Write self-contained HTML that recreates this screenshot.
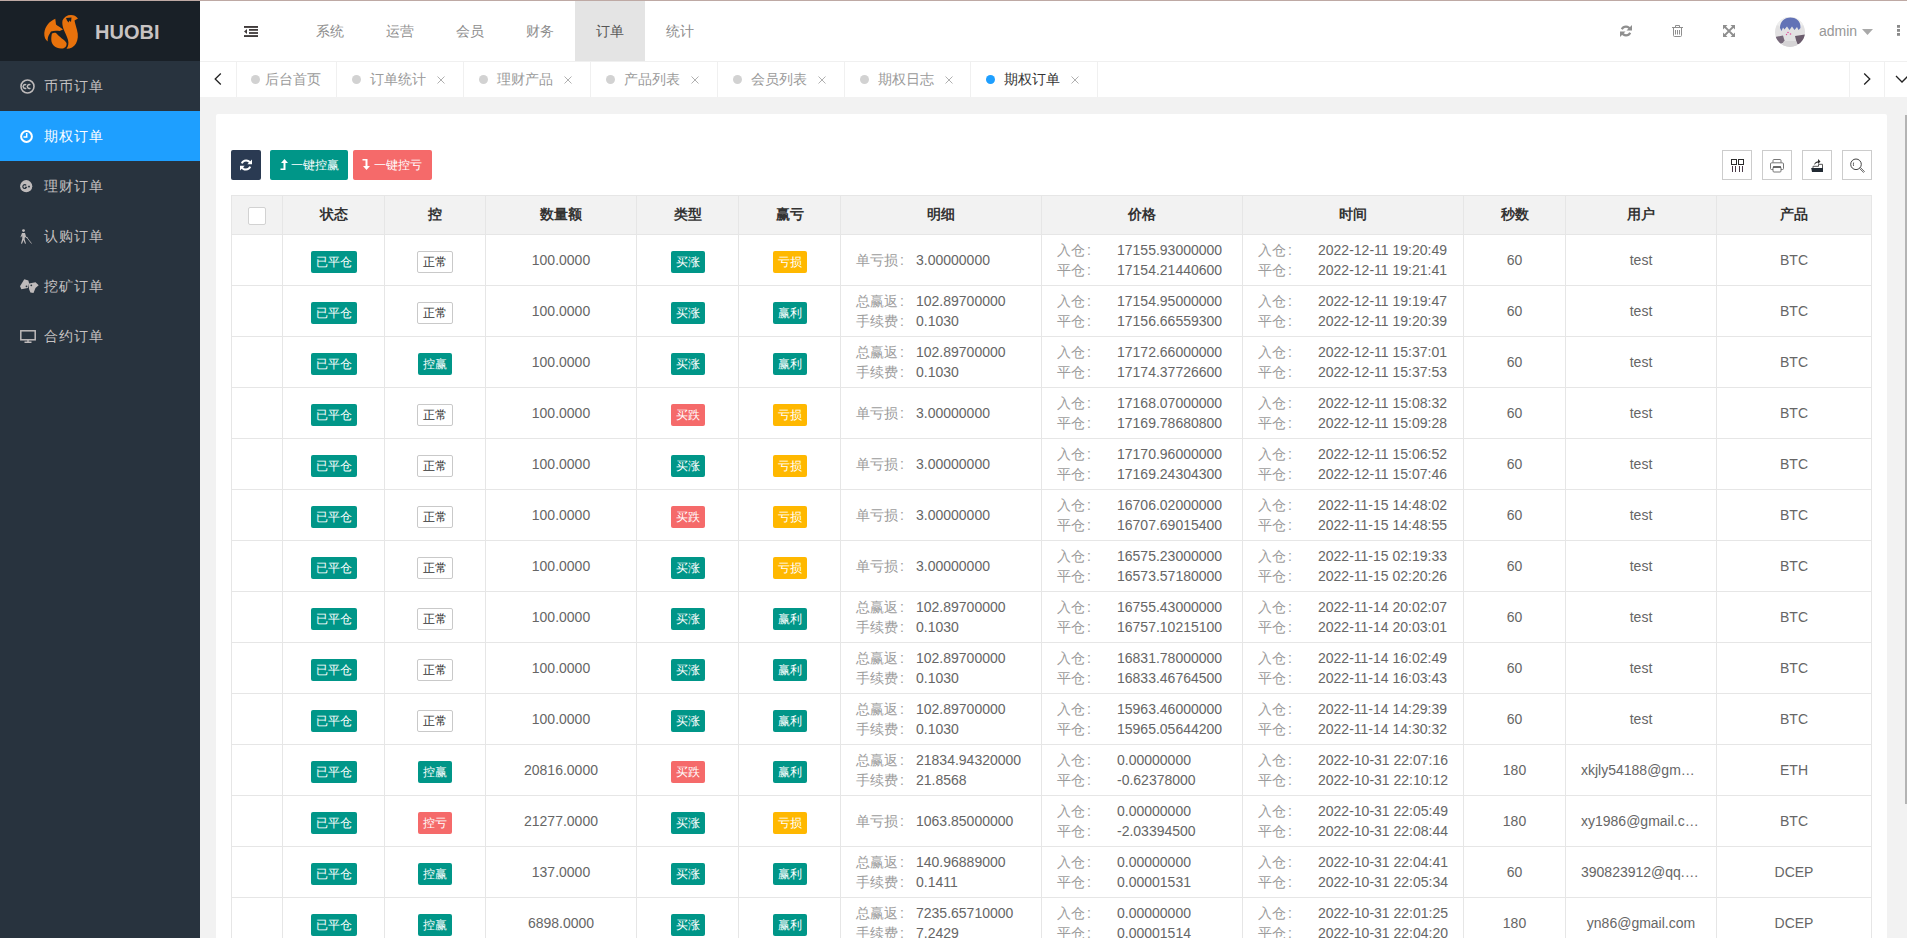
<!DOCTYPE html>
<html><head><meta charset="utf-8"><title>期权订单</title>
<style>
*{margin:0;padding:0;box-sizing:border-box}
html,body{width:1907px;height:938px;overflow:hidden}
body{position:relative;background:#f2f2f2;font-family:"Liberation Sans",sans-serif;font-size:14px;color:#666}
.abs{position:absolute}
.topline{position:absolute;left:0;top:0;width:1907px;height:1px;background:#bea9a4}
.side{position:absolute;left:0;top:1px;width:200px;height:937px;background:#28333e}
.logo{position:absolute;left:0;top:0;width:200px;height:60px;background:#192027}
.logo .t{position:absolute;left:95px;top:19px;font-size:20px;font-weight:bold;color:#c8c3c3;line-height:24px;letter-spacing:0}
.mi{position:absolute;left:0;width:200px;height:50px;color:#c6c2c2}
.mi.on{background:#1e9fff;color:#fff}
.mi .tx{position:absolute;left:44px;top:16px;font-size:14px;line-height:18px;white-space:nowrap;letter-spacing:1px}
.mi svg{position:absolute}
.hdr{position:absolute;left:200px;top:1px;width:1707px;height:60px;background:#fff}
.nav{position:absolute;top:0;height:60px;width:70px;text-align:center;line-height:60px;font-size:14px;color:#8d8d8d}
.nav.on{background:#e4e4e4;color:#565656}
.tabs{position:absolute;left:200px;top:61px;width:1707px;height:36px;background:#fff;border-top:1px solid #f0f0f0}
.sep{position:absolute;top:0;width:1px;height:35px;background:#f0f0f0}
.tab{position:absolute;top:0;height:35px;line-height:35px;font-size:14px;color:#9a9a9a;white-space:nowrap}
.dot{position:absolute;width:9px;height:9px;border-radius:50%;background:#d2d2d2}
.x{position:absolute;font-size:14px;color:#aaa}
.card{position:absolute;left:216px;top:114px;width:1671px;height:830px;background:#fff;border-radius:2px}
.btn{position:absolute;top:150px;height:30px;border-radius:2px;color:#fff;font-size:12px;line-height:30px;white-space:nowrap}
.tool{position:absolute;top:150px;width:30px;height:30px;border:1px solid #ccc}
.grid{position:absolute;background:#e6e6e6}
.th{position:absolute;top:195px;height:39px;line-height:39px;text-align:center;font-size:14px;font-weight:bold;color:#333}
.c{position:absolute;text-align:center;white-space:nowrap;font-size:14px;color:#666}
.bd{position:absolute;height:22px;line-height:22px;font-size:12px;color:#fff;border-radius:2px;text-align:center;white-space:nowrap}
.rim{position:absolute;height:22px;line-height:20px;font-size:12px;color:#333;border:1px solid #c9c9c9;border-radius:2px;background:#fff;text-align:center;white-space:nowrap}
.ln{position:absolute;font-size:14px;line-height:20px;white-space:nowrap}
.lb{color:#9c9c9c}
.vl{color:#666}
.co{margin-left:2px}
</style></head><body>
<div class="topline"></div>

<div class="side"><div class="logo">
<svg class="abs" style="left:40px;top:11px" width="42" height="40" viewBox="0 0 42 40">
<path fill="#e8720c" d="M15.3 6.8 C10 9 5 14 4.3 21 C4 25 5.5 28 7.7 29.5 C7.5 27 8 24 9.5 22 L11 19.5 C14 18.5 17 18.8 19.7 19 L23 17.5 C20.5 15.5 18 14 16 12.5 Z"/>
<path fill="#e8720c" d="M12 21.5 C14 20.5 16 20.5 17 22 C19 25 24 27 26.5 31 C27 34 25 36.5 22 36.5 C16 37 11.5 33 11.3 28 C11.2 25.5 11.5 23 12 21.5 Z"/>
<path fill="#e8720c" d="M22.5 8.5 C24 5 27 3 31 3 C34 3 36 4 38 6.5 L34.5 8.5 C35 11 36 14 37 18 C38.5 23 38 28 36 31.5 C34 35 30 37 26.5 36.8 C28.5 34 28.8 31 28 28 C27 24 25 21 23.5 17 C22.5 14 22 11 22.5 8.5 Z"/>
<path fill="#192027" d="M26 6 L31.5 5.5 L31 10 L29.5 8.5 L28.5 10.5 L27 8.5 Z"/>
</svg>
<div class="t">HUOBI</div></div>
<div class="mi" style="top:60px">
<svg style="left:20px;top:18px" width="15" height="15" viewBox="0 0 15 15"><circle cx="7.5" cy="7.5" r="6.5" fill="none" stroke="#bfbbbb" stroke-width="1.6"/><path d="M6.2 5.8a2 2 0 1 0 0 3.4M10.4 5.8a2 2 0 1 0 0 3.4" fill="none" stroke="#bfbbbb" stroke-width="1.5"/></svg>
<div class="tx">币币订单</div></div>
<div class="mi on" style="top:110px">
<svg style="left:20px;top:19px" width="13" height="13" viewBox="0 0 13 13"><circle cx="6.5" cy="6.5" r="5.4" fill="none" stroke="#fff" stroke-width="2"/><path d="M6.7 3V7H3.5" fill="none" stroke="#fff" stroke-width="1.5"/></svg>
<div class="tx">期权订单</div></div>
<div class="mi" style="top:160px">
<svg style="left:20px;top:19px" width="13" height="13" viewBox="0 0 13 13"><circle cx="6.2" cy="6.2" r="6.1" fill="#bfbbbb"/><path d="M6.2 5.3a1.9 1.9 0 1 0 0.3 2h-1.5" fill="none" stroke="#28333e" stroke-width="1.2"/><path d="M9 5.6v2M8 6.6h2" stroke="#28333e" stroke-width="0.9"/></svg>
<div class="tx">理财订单</div></div>
<div class="mi" style="top:210px">
<svg style="left:20px;top:18px" width="12" height="15" viewBox="0 0 12 15"><circle cx="3.5" cy="1.6" r="1.4" fill="#bfbbbb"/><path d="M2 4 L5 4 L6 7.5 L8 9 L7.5 9.6 L5 8 L4.6 10 L6 14.5 L5 14.8 L3.5 11 L2 14.8 L1 14.5 L2.3 9.5 L2.2 6.5 L1 8.5 L0.5 8 Z" fill="#bfbbbb"/><path d="M6.5 8 L11.5 14.5" stroke="#bfbbbb" stroke-width="0.8"/></svg>
<div class="tx">认购订单</div></div>
<div class="mi" style="top:260px">
<svg style="left:20px;top:17px" width="19" height="16" viewBox="0 0 19 16"><path d="M0 8.3 L4.3 1.3 L8.4 2.6 L9.1 5.4 L7.8 9.9 L1.4 11.2 Z" fill="#bfbbbb"/><path d="M9.1 5.4 L15.5 4.2 L18.7 7.3 L15.5 9.9 L13.5 15 L10.4 14.4 L9.1 11.2 L8.6 8 Z" fill="#bfbbbb"/><circle cx="6.5" cy="8.3" r="0.9" fill="#28333e"/><circle cx="11.3" cy="7.3" r="0.9" fill="#28333e"/></svg>
<div class="tx">挖矿订单</div></div>
<div class="mi" style="top:310px">
<svg style="left:20px;top:19px" width="16" height="13" viewBox="0 0 16 13"><rect x="0.8" y="0.8" width="14.4" height="9" fill="none" stroke="#bfbbbb" stroke-width="1.5"/><path d="M4.5 12.2H11.5M8 10V12" stroke="#bfbbbb" stroke-width="1.4"/></svg>
<div class="tx">合约订单</div></div>
</div>
<div class="hdr">
<svg class="abs" style="left:44px;top:24px" width="14" height="13" viewBox="0 0 14 13"><rect x="0" y="1" width="14" height="1.9" fill="#403b3b"/><rect x="5" y="4" width="9" height="1.8" fill="#403b3b"/><rect x="5" y="7.1" width="9" height="1.8" fill="#403b3b"/><rect x="0" y="10.1" width="14" height="1.9" fill="#403b3b"/><path d="M0 6.4 L3 3.9 V8.9 Z" fill="#403b3b"/></svg>
<div class="nav" style="left:95px">系统</div>
<div class="nav" style="left:165px">运营</div>
<div class="nav" style="left:235px">会员</div>
<div class="nav" style="left:305px">财务</div>
<div class="nav on" style="left:375px">订单</div>
<div class="nav" style="left:445px">统计</div>
<svg class="abs" style="left:1420px;top:24px" width="12" height="12" viewBox="0 0 12 12"><path d="M10.2 4.5A4.6 4.6 0 0 0 1.8 4.3" fill="none" stroke="#8f8f8f" stroke-width="2.1"/><path d="M12 0V5.5H6.5Z" fill="#8f8f8f"/><path d="M1.8 7.5A4.6 4.6 0 0 0 10.2 7.7" fill="none" stroke="#8f8f8f" stroke-width="2.1"/><path d="M0 12V6.5H5.5Z" fill="#8f8f8f"/></svg>
<svg class="abs" style="left:1472px;top:24px" width="12" height="12" viewBox="0 0 12 12"><path d="M3.5 2V0.5H7.5V2" fill="none" stroke="#8f8f8f" stroke-width="1"/><path d="M0 2.5H11" stroke="#8f8f8f" stroke-width="1"/><path d="M1.5 3V10.5Q1.5 11.5 2.5 11.5H8.5Q9.5 11.5 9.5 10.5V3" fill="none" stroke="#8f8f8f" stroke-width="1"/><path d="M3.5 5V9.5M5.5 5V9.5M7.5 5V9.5" stroke="#8f8f8f" stroke-width="1"/></svg>
<svg class="abs" style="left:1523px;top:24px" width="12" height="12" viewBox="0 0 12 12"><path d="M0 0H4.5L0 4.5Z M12 0V4.5L7.5 0Z M0 12V7.5L4.5 12Z M12 12H7.5L12 7.5Z" fill="#8f8f8f"/><path d="M1.5 1.5L10.5 10.5M10.5 1.5L1.5 10.5" stroke="#8f8f8f" stroke-width="1.8"/></svg>
<svg class="abs" style="left:1575px;top:16px" width="30" height="30" viewBox="0 0 30 30"><defs><clipPath id="av"><circle cx="15" cy="15" r="15"/></clipPath></defs><g clip-path="url(#av)"><rect width="30" height="30" fill="#e2e1e2"/><path d="M0 0H30V10 L27 8 L25 12 L22 9 L20 12 L18 9 L15 12 L13 9 L10 12 L8 9 L5 10 L3 8 L0 10Z" fill="#eeeeee"/><path d="M5 11 C5 5 9 0.5 15.5 0.5 C22 0.5 26 5 25.5 11 L23.5 13 L22 10 L19.5 13 L17 9.5 L14.5 13 L12 9.5 L9.5 12.5 L8 10.5 L6.5 14 Z" fill="#6272b6"/><path d="M0 20 L8 18.5 L10 25 L5 27 L0 27Z" fill="#76687a"/><path d="M20 19 L30 17.5 L30 27 L22 27Z" fill="#6a5b6c"/><path d="M9 24 L21 24 L24 30 L6 30Z" fill="#d5d3d5"/><circle cx="13" cy="15.5" r="0.8" fill="#e0509a"/><circle cx="15.5" cy="17" r="0.8" fill="#e0509a"/><circle cx="11.5" cy="17.5" r="0.7" fill="#e0509a"/></g></svg>
<div class="abs" style="left:1619px;top:21px;font-size:14px;line-height:18px;color:#979797">admin</div>
<svg class="abs" style="left:1662px;top:28px" width="11" height="6" viewBox="0 0 11 6"><path d="M0 0H11L5.5 6Z" fill="#a9a9a9"/></svg>
<svg class="abs" style="left:1697px;top:24px" width="3" height="11" viewBox="0 0 3 11"><rect y="0" width="3" height="2.8" fill="#8a8a8a"/><rect y="4" width="3" height="2.8" fill="#8a8a8a"/><rect y="8" width="3" height="2.8" fill="#8a8a8a"/></svg>
</div>
<div class="tabs">
<svg class="abs" style="left:14px;top:10px" width="8" height="14" viewBox="0 0 8 14"><path d="M6.8 1.5L1.2 7L6.8 12.5" fill="none" stroke="#222" stroke-width="1.3"/></svg>
<div class="sep" style="left:36px"></div>
<div class="sep" style="left:136px"></div>
<div class="sep" style="left:263px"></div>
<div class="sep" style="left:390px"></div>
<div class="sep" style="left:517px"></div>
<div class="sep" style="left:644px"></div>
<div class="sep" style="left:770px"></div>
<div class="sep" style="left:897px"></div>
<div class="sep" style="left:1649px"></div>
<div class="sep" style="left:1684px"></div>
<div class="dot" style="left:51px;top:13px;background:#d2d2d2"></div>
<div class="tab" style="left:65px;color:#9a9a9a">后台首页</div>
<div class="dot" style="left:152px;top:13px;background:#d2d2d2"></div>
<div class="tab" style="left:170px;color:#9a9a9a">订单统计</div>
<svg class="abs" style="left:237px;top:14px" width="8" height="8" viewBox="0 0 8 8"><path d="M0.5 0.5L7.5 7.5M7.5 0.5L0.5 7.5" stroke="#b0b0b0" stroke-width="1"/></svg>
<div class="dot" style="left:279px;top:13px;background:#d2d2d2"></div>
<div class="tab" style="left:297px;color:#9a9a9a">理财产品</div>
<svg class="abs" style="left:364px;top:14px" width="8" height="8" viewBox="0 0 8 8"><path d="M0.5 0.5L7.5 7.5M7.5 0.5L0.5 7.5" stroke="#b0b0b0" stroke-width="1"/></svg>
<div class="dot" style="left:406px;top:13px;background:#d2d2d2"></div>
<div class="tab" style="left:424px;color:#9a9a9a">产品列表</div>
<svg class="abs" style="left:491px;top:14px" width="8" height="8" viewBox="0 0 8 8"><path d="M0.5 0.5L7.5 7.5M7.5 0.5L0.5 7.5" stroke="#b0b0b0" stroke-width="1"/></svg>
<div class="dot" style="left:533px;top:13px;background:#d2d2d2"></div>
<div class="tab" style="left:551px;color:#9a9a9a">会员列表</div>
<svg class="abs" style="left:618px;top:14px" width="8" height="8" viewBox="0 0 8 8"><path d="M0.5 0.5L7.5 7.5M7.5 0.5L0.5 7.5" stroke="#b0b0b0" stroke-width="1"/></svg>
<div class="dot" style="left:660px;top:13px;background:#d2d2d2"></div>
<div class="tab" style="left:678px;color:#9a9a9a">期权日志</div>
<svg class="abs" style="left:745px;top:14px" width="8" height="8" viewBox="0 0 8 8"><path d="M0.5 0.5L7.5 7.5M7.5 0.5L0.5 7.5" stroke="#b0b0b0" stroke-width="1"/></svg>
<div class="dot" style="left:786px;top:13px;background:#1e9fff"></div>
<div class="tab" style="left:804px;color:#333">期权订单</div>
<svg class="abs" style="left:871px;top:14px" width="8" height="8" viewBox="0 0 8 8"><path d="M0.5 0.5L7.5 7.5M7.5 0.5L0.5 7.5" stroke="#b0b0b0" stroke-width="1"/></svg>
<svg class="abs" style="left:1663px;top:10px" width="8" height="14" viewBox="0 0 8 14"><path d="M1.2 1.5L6.8 7L1.2 12.5" fill="none" stroke="#222" stroke-width="1.3"/></svg>
<svg class="abs" style="left:1695px;top:13px" width="14" height="8" viewBox="0 0 14 8"><path d="M1 1L7 7L13 1" fill="none" stroke="#222" stroke-width="1.3"/></svg>
</div>
<div class="abs" style="left:1905px;top:115px;width:2px;height:689px;background:#b4b4b4"></div>
<div class="card"></div>
<div class="btn" style="left:231px;width:30px;background:#2a3a52"><svg class="abs" style="left:9px;top:9px" width="12" height="12" viewBox="0 0 12 12"><path d="M10.3 4.2A4.6 4.6 0 0 0 1.8 4.3" fill="none" stroke="#fff" stroke-width="2"/><path d="M12 0.5V5.2H7.3Z" fill="#fff"/><path d="M1.7 7.8A4.6 4.6 0 0 0 10.2 7.7" fill="none" stroke="#fff" stroke-width="2"/><path d="M0 11.5V6.8H4.7Z" fill="#fff"/></svg></div>
<div class="btn" style="left:270px;width:78px;background:#009688"><svg class="abs" style="left:10px;top:9px" width="8" height="12" viewBox="0 0 8 12"><path d="M4.5 0L8 4H5.5V11H0.5V9.5H3.5V4H1Z" fill="#fff"/></svg><span class="abs" style="left:21px;top:0">一键控赢</span></div>
<div class="btn" style="left:353px;width:79px;background:#f56a6a"><svg class="abs" style="left:9px;top:9px" width="8" height="12" viewBox="0 0 8 12"><path d="M0.5 0H5.5V7H8L4.5 11L1 7H3.5V1.5H0.5Z" fill="#fff"/></svg><span class="abs" style="left:21px;top:0">一键控亏</span></div>
<div class="tool" style="left:1722px"><svg class="abs" style="left:7px;top:7px" width="15" height="15" viewBox="0 0 15 15"><rect x="1.5" y="1.5" width="5" height="5" fill="none" stroke="#2b2b2b" stroke-width="1"/><rect x="8.5" y="1.5" width="5" height="5" fill="none" stroke="#2b2b2b" stroke-width="1"/><path d="M2.5 8V14M5.5 8V14M9.5 8V14M12.5 8V14" stroke="#4a3a48" stroke-width="1"/></svg></div>
<div class="tool" style="left:1762px"><svg class="abs" style="left:7px;top:7px" width="15" height="15" viewBox="0 0 15 15"><path d="M3 4.5V2.5Q3 1.5 4 1.5H10Q11 1.5 11 2.5V4.5" fill="none" stroke="#777" stroke-width="1"/><path d="M3 11.5H1.5Q0.5 11.5 0.5 10.5V6Q0.5 4.8 1.7 4.8H12.3Q13.5 4.8 13.5 6V10.5Q13.5 11.5 12.5 11.5H11" fill="none" stroke="#777" stroke-width="1"/><rect x="3" y="9" width="8" height="5" rx="1" fill="none" stroke="#777" stroke-width="1"/><path d="M3 9H11" stroke="#333" stroke-width="1.2"/></svg></div>
<div class="tool" style="left:1802px"><svg class="abs" style="left:7px;top:7px" width="15" height="15" viewBox="0 0 15 15"><path d="M4.2 7 Q4.5 3.6 8 3.2 V1 L10.5 3.6 L8 6 V4.6 Q5.8 4.8 4.2 7 Z" fill="#2b2b2b"/><path d="M3 10V8.3H8.5V6.3H12.5V10" fill="none" stroke="#555" stroke-width="1"/><path d="M1.2 10H13V14H2Z" fill="#222a33"/></svg></div>
<div class="tool" style="left:1842px"><svg class="abs" style="left:7px;top:7px" width="16" height="16" viewBox="0 0 16 16"><circle cx="6" cy="6.3" r="5.3" fill="none" stroke="#444" stroke-width="1"/><path d="M10.3 9.4L14.4 13.5L13.5 14.4L9.4 10.3" fill="none" stroke="#555" stroke-width="0.9"/><path d="M3.6 4.5Q3.1 6.3 3.6 8" fill="none" stroke="#555" stroke-width="0.9"/></svg></div>
<div class="abs" style="left:231px;top:195px;width:1641px;height:39px;background:#f2f2f2"></div>
<div class="grid" style="left:231px;top:195px;width:1641px;height:1px"></div>
<div class="grid" style="left:231px;top:234px;width:1641px;height:1px"></div>
<div class="grid" style="left:231px;top:285px;width:1641px;height:1px"></div>
<div class="grid" style="left:231px;top:336px;width:1641px;height:1px"></div>
<div class="grid" style="left:231px;top:387px;width:1641px;height:1px"></div>
<div class="grid" style="left:231px;top:438px;width:1641px;height:1px"></div>
<div class="grid" style="left:231px;top:489px;width:1641px;height:1px"></div>
<div class="grid" style="left:231px;top:540px;width:1641px;height:1px"></div>
<div class="grid" style="left:231px;top:591px;width:1641px;height:1px"></div>
<div class="grid" style="left:231px;top:642px;width:1641px;height:1px"></div>
<div class="grid" style="left:231px;top:693px;width:1641px;height:1px"></div>
<div class="grid" style="left:231px;top:744px;width:1641px;height:1px"></div>
<div class="grid" style="left:231px;top:795px;width:1641px;height:1px"></div>
<div class="grid" style="left:231px;top:846px;width:1641px;height:1px"></div>
<div class="grid" style="left:231px;top:897px;width:1641px;height:1px"></div>
<div class="grid" style="left:231px;top:948px;width:1641px;height:1px"></div>
<div class="grid" style="left:231px;top:195px;width:1px;height:754px"></div>
<div class="grid" style="left:282px;top:195px;width:1px;height:754px"></div>
<div class="grid" style="left:384px;top:195px;width:1px;height:754px"></div>
<div class="grid" style="left:485px;top:195px;width:1px;height:754px"></div>
<div class="grid" style="left:636px;top:195px;width:1px;height:754px"></div>
<div class="grid" style="left:738px;top:195px;width:1px;height:754px"></div>
<div class="grid" style="left:840px;top:195px;width:1px;height:754px"></div>
<div class="grid" style="left:1041px;top:195px;width:1px;height:754px"></div>
<div class="grid" style="left:1242px;top:195px;width:1px;height:754px"></div>
<div class="grid" style="left:1463px;top:195px;width:1px;height:754px"></div>
<div class="grid" style="left:1565px;top:195px;width:1px;height:754px"></div>
<div class="grid" style="left:1716px;top:195px;width:1px;height:754px"></div>
<div class="grid" style="left:1871px;top:195px;width:1px;height:754px"></div>
<div class="abs" style="left:248px;top:207px;width:18px;height:18px;border:1px solid #d2d2d2;border-radius:2px;background:#fff"></div>
<div class="th" style="left:283px;width:101px">状态</div>
<div class="th" style="left:385px;width:100px">控</div>
<div class="th" style="left:486px;width:150px">数量额</div>
<div class="th" style="left:637px;width:101px">类型</div>
<div class="th" style="left:739px;width:101px">赢亏</div>
<div class="th" style="left:841px;width:200px">明细</div>
<div class="th" style="left:1042px;width:200px">价格</div>
<div class="th" style="left:1243px;width:220px">时间</div>
<div class="th" style="left:1464px;width:101px">秒数</div>
<div class="th" style="left:1566px;width:150px">用户</div>
<div class="th" style="left:1717px;width:154px">产品</div>
<div class="bd" style="left:311px;top:251px;width:46px;background:#009688">已平仓</div>
<div class="rim" style="left:417px;top:251px;width:36px">正常</div>
<div class="c" style="left:486px;width:150px;top:250px;line-height:20px">100.0000</div>
<div class="bd" style="left:671px;top:251px;width:34px;background:#009688">买涨</div>
<div class="bd" style="left:773px;top:251px;width:34px;background:#ffb800">亏损</div>
<div class="ln" style="left:856px;top:250px"><span class="lb">单亏损<span class=co>:</span></span></div><div class="ln vl" style="left:916px;top:250px">3.00000000</div>
<div class="ln lb" style="left:1057px;top:240px">入仓<span class=co>:</span></div><div class="ln vl" style="left:1117px;top:240px">17155.93000000</div>
<div class="ln lb" style="left:1057px;top:260px">平仓<span class=co>:</span></div><div class="ln vl" style="left:1117px;top:260px">17154.21440600</div>
<div class="ln lb" style="left:1258px;top:240px">入仓<span class=co>:</span></div><div class="ln vl" style="left:1318px;top:240px">2022-12-11 19:20:49</div>
<div class="ln lb" style="left:1258px;top:260px">平仓<span class=co>:</span></div><div class="ln vl" style="left:1318px;top:260px">2022-12-11 19:21:41</div>
<div class="c" style="left:1464px;width:101px;top:250px;line-height:20px;padding:0 15px;overflow:hidden;text-overflow:ellipsis">60</div>
<div class="c" style="left:1566px;width:150px;top:250px;line-height:20px;padding:0 15px;overflow:hidden;text-overflow:ellipsis">test</div>
<div class="c" style="left:1717px;width:154px;top:250px;line-height:20px;padding:0 15px;overflow:hidden;text-overflow:ellipsis">BTC</div>
<div class="bd" style="left:311px;top:302px;width:46px;background:#009688">已平仓</div>
<div class="rim" style="left:417px;top:302px;width:36px">正常</div>
<div class="c" style="left:486px;width:150px;top:301px;line-height:20px">100.0000</div>
<div class="bd" style="left:671px;top:302px;width:34px;background:#009688">买涨</div>
<div class="bd" style="left:773px;top:302px;width:34px;background:#009688">赢利</div>
<div class="ln" style="left:856px;top:291px"><span class="lb">总赢返<span class=co>:</span></span></div><div class="ln vl" style="left:916px;top:291px">102.89700000</div>
<div class="ln" style="left:856px;top:311px"><span class="lb">手续费<span class=co>:</span></span></div><div class="ln vl" style="left:916px;top:311px">0.1030</div>
<div class="ln lb" style="left:1057px;top:291px">入仓<span class=co>:</span></div><div class="ln vl" style="left:1117px;top:291px">17154.95000000</div>
<div class="ln lb" style="left:1057px;top:311px">平仓<span class=co>:</span></div><div class="ln vl" style="left:1117px;top:311px">17156.66559300</div>
<div class="ln lb" style="left:1258px;top:291px">入仓<span class=co>:</span></div><div class="ln vl" style="left:1318px;top:291px">2022-12-11 19:19:47</div>
<div class="ln lb" style="left:1258px;top:311px">平仓<span class=co>:</span></div><div class="ln vl" style="left:1318px;top:311px">2022-12-11 19:20:39</div>
<div class="c" style="left:1464px;width:101px;top:301px;line-height:20px;padding:0 15px;overflow:hidden;text-overflow:ellipsis">60</div>
<div class="c" style="left:1566px;width:150px;top:301px;line-height:20px;padding:0 15px;overflow:hidden;text-overflow:ellipsis">test</div>
<div class="c" style="left:1717px;width:154px;top:301px;line-height:20px;padding:0 15px;overflow:hidden;text-overflow:ellipsis">BTC</div>
<div class="bd" style="left:311px;top:353px;width:46px;background:#009688">已平仓</div>
<div class="bd" style="left:418px;top:353px;width:34px;background:#009688">控赢</div>
<div class="c" style="left:486px;width:150px;top:352px;line-height:20px">100.0000</div>
<div class="bd" style="left:671px;top:353px;width:34px;background:#009688">买涨</div>
<div class="bd" style="left:773px;top:353px;width:34px;background:#009688">赢利</div>
<div class="ln" style="left:856px;top:342px"><span class="lb">总赢返<span class=co>:</span></span></div><div class="ln vl" style="left:916px;top:342px">102.89700000</div>
<div class="ln" style="left:856px;top:362px"><span class="lb">手续费<span class=co>:</span></span></div><div class="ln vl" style="left:916px;top:362px">0.1030</div>
<div class="ln lb" style="left:1057px;top:342px">入仓<span class=co>:</span></div><div class="ln vl" style="left:1117px;top:342px">17172.66000000</div>
<div class="ln lb" style="left:1057px;top:362px">平仓<span class=co>:</span></div><div class="ln vl" style="left:1117px;top:362px">17174.37726600</div>
<div class="ln lb" style="left:1258px;top:342px">入仓<span class=co>:</span></div><div class="ln vl" style="left:1318px;top:342px">2022-12-11 15:37:01</div>
<div class="ln lb" style="left:1258px;top:362px">平仓<span class=co>:</span></div><div class="ln vl" style="left:1318px;top:362px">2022-12-11 15:37:53</div>
<div class="c" style="left:1464px;width:101px;top:352px;line-height:20px;padding:0 15px;overflow:hidden;text-overflow:ellipsis">60</div>
<div class="c" style="left:1566px;width:150px;top:352px;line-height:20px;padding:0 15px;overflow:hidden;text-overflow:ellipsis">test</div>
<div class="c" style="left:1717px;width:154px;top:352px;line-height:20px;padding:0 15px;overflow:hidden;text-overflow:ellipsis">BTC</div>
<div class="bd" style="left:311px;top:404px;width:46px;background:#009688">已平仓</div>
<div class="rim" style="left:417px;top:404px;width:36px">正常</div>
<div class="c" style="left:486px;width:150px;top:403px;line-height:20px">100.0000</div>
<div class="bd" style="left:671px;top:404px;width:34px;background:#f56a6a">买跌</div>
<div class="bd" style="left:773px;top:404px;width:34px;background:#ffb800">亏损</div>
<div class="ln" style="left:856px;top:403px"><span class="lb">单亏损<span class=co>:</span></span></div><div class="ln vl" style="left:916px;top:403px">3.00000000</div>
<div class="ln lb" style="left:1057px;top:393px">入仓<span class=co>:</span></div><div class="ln vl" style="left:1117px;top:393px">17168.07000000</div>
<div class="ln lb" style="left:1057px;top:413px">平仓<span class=co>:</span></div><div class="ln vl" style="left:1117px;top:413px">17169.78680800</div>
<div class="ln lb" style="left:1258px;top:393px">入仓<span class=co>:</span></div><div class="ln vl" style="left:1318px;top:393px">2022-12-11 15:08:32</div>
<div class="ln lb" style="left:1258px;top:413px">平仓<span class=co>:</span></div><div class="ln vl" style="left:1318px;top:413px">2022-12-11 15:09:28</div>
<div class="c" style="left:1464px;width:101px;top:403px;line-height:20px;padding:0 15px;overflow:hidden;text-overflow:ellipsis">60</div>
<div class="c" style="left:1566px;width:150px;top:403px;line-height:20px;padding:0 15px;overflow:hidden;text-overflow:ellipsis">test</div>
<div class="c" style="left:1717px;width:154px;top:403px;line-height:20px;padding:0 15px;overflow:hidden;text-overflow:ellipsis">BTC</div>
<div class="bd" style="left:311px;top:455px;width:46px;background:#009688">已平仓</div>
<div class="rim" style="left:417px;top:455px;width:36px">正常</div>
<div class="c" style="left:486px;width:150px;top:454px;line-height:20px">100.0000</div>
<div class="bd" style="left:671px;top:455px;width:34px;background:#009688">买涨</div>
<div class="bd" style="left:773px;top:455px;width:34px;background:#ffb800">亏损</div>
<div class="ln" style="left:856px;top:454px"><span class="lb">单亏损<span class=co>:</span></span></div><div class="ln vl" style="left:916px;top:454px">3.00000000</div>
<div class="ln lb" style="left:1057px;top:444px">入仓<span class=co>:</span></div><div class="ln vl" style="left:1117px;top:444px">17170.96000000</div>
<div class="ln lb" style="left:1057px;top:464px">平仓<span class=co>:</span></div><div class="ln vl" style="left:1117px;top:464px">17169.24304300</div>
<div class="ln lb" style="left:1258px;top:444px">入仓<span class=co>:</span></div><div class="ln vl" style="left:1318px;top:444px">2022-12-11 15:06:52</div>
<div class="ln lb" style="left:1258px;top:464px">平仓<span class=co>:</span></div><div class="ln vl" style="left:1318px;top:464px">2022-12-11 15:07:46</div>
<div class="c" style="left:1464px;width:101px;top:454px;line-height:20px;padding:0 15px;overflow:hidden;text-overflow:ellipsis">60</div>
<div class="c" style="left:1566px;width:150px;top:454px;line-height:20px;padding:0 15px;overflow:hidden;text-overflow:ellipsis">test</div>
<div class="c" style="left:1717px;width:154px;top:454px;line-height:20px;padding:0 15px;overflow:hidden;text-overflow:ellipsis">BTC</div>
<div class="bd" style="left:311px;top:506px;width:46px;background:#009688">已平仓</div>
<div class="rim" style="left:417px;top:506px;width:36px">正常</div>
<div class="c" style="left:486px;width:150px;top:505px;line-height:20px">100.0000</div>
<div class="bd" style="left:671px;top:506px;width:34px;background:#f56a6a">买跌</div>
<div class="bd" style="left:773px;top:506px;width:34px;background:#ffb800">亏损</div>
<div class="ln" style="left:856px;top:505px"><span class="lb">单亏损<span class=co>:</span></span></div><div class="ln vl" style="left:916px;top:505px">3.00000000</div>
<div class="ln lb" style="left:1057px;top:495px">入仓<span class=co>:</span></div><div class="ln vl" style="left:1117px;top:495px">16706.02000000</div>
<div class="ln lb" style="left:1057px;top:515px">平仓<span class=co>:</span></div><div class="ln vl" style="left:1117px;top:515px">16707.69015400</div>
<div class="ln lb" style="left:1258px;top:495px">入仓<span class=co>:</span></div><div class="ln vl" style="left:1318px;top:495px">2022-11-15 14:48:02</div>
<div class="ln lb" style="left:1258px;top:515px">平仓<span class=co>:</span></div><div class="ln vl" style="left:1318px;top:515px">2022-11-15 14:48:55</div>
<div class="c" style="left:1464px;width:101px;top:505px;line-height:20px;padding:0 15px;overflow:hidden;text-overflow:ellipsis">60</div>
<div class="c" style="left:1566px;width:150px;top:505px;line-height:20px;padding:0 15px;overflow:hidden;text-overflow:ellipsis">test</div>
<div class="c" style="left:1717px;width:154px;top:505px;line-height:20px;padding:0 15px;overflow:hidden;text-overflow:ellipsis">BTC</div>
<div class="bd" style="left:311px;top:557px;width:46px;background:#009688">已平仓</div>
<div class="rim" style="left:417px;top:557px;width:36px">正常</div>
<div class="c" style="left:486px;width:150px;top:556px;line-height:20px">100.0000</div>
<div class="bd" style="left:671px;top:557px;width:34px;background:#009688">买涨</div>
<div class="bd" style="left:773px;top:557px;width:34px;background:#ffb800">亏损</div>
<div class="ln" style="left:856px;top:556px"><span class="lb">单亏损<span class=co>:</span></span></div><div class="ln vl" style="left:916px;top:556px">3.00000000</div>
<div class="ln lb" style="left:1057px;top:546px">入仓<span class=co>:</span></div><div class="ln vl" style="left:1117px;top:546px">16575.23000000</div>
<div class="ln lb" style="left:1057px;top:566px">平仓<span class=co>:</span></div><div class="ln vl" style="left:1117px;top:566px">16573.57180000</div>
<div class="ln lb" style="left:1258px;top:546px">入仓<span class=co>:</span></div><div class="ln vl" style="left:1318px;top:546px">2022-11-15 02:19:33</div>
<div class="ln lb" style="left:1258px;top:566px">平仓<span class=co>:</span></div><div class="ln vl" style="left:1318px;top:566px">2022-11-15 02:20:26</div>
<div class="c" style="left:1464px;width:101px;top:556px;line-height:20px;padding:0 15px;overflow:hidden;text-overflow:ellipsis">60</div>
<div class="c" style="left:1566px;width:150px;top:556px;line-height:20px;padding:0 15px;overflow:hidden;text-overflow:ellipsis">test</div>
<div class="c" style="left:1717px;width:154px;top:556px;line-height:20px;padding:0 15px;overflow:hidden;text-overflow:ellipsis">BTC</div>
<div class="bd" style="left:311px;top:608px;width:46px;background:#009688">已平仓</div>
<div class="rim" style="left:417px;top:608px;width:36px">正常</div>
<div class="c" style="left:486px;width:150px;top:607px;line-height:20px">100.0000</div>
<div class="bd" style="left:671px;top:608px;width:34px;background:#009688">买涨</div>
<div class="bd" style="left:773px;top:608px;width:34px;background:#009688">赢利</div>
<div class="ln" style="left:856px;top:597px"><span class="lb">总赢返<span class=co>:</span></span></div><div class="ln vl" style="left:916px;top:597px">102.89700000</div>
<div class="ln" style="left:856px;top:617px"><span class="lb">手续费<span class=co>:</span></span></div><div class="ln vl" style="left:916px;top:617px">0.1030</div>
<div class="ln lb" style="left:1057px;top:597px">入仓<span class=co>:</span></div><div class="ln vl" style="left:1117px;top:597px">16755.43000000</div>
<div class="ln lb" style="left:1057px;top:617px">平仓<span class=co>:</span></div><div class="ln vl" style="left:1117px;top:617px">16757.10215100</div>
<div class="ln lb" style="left:1258px;top:597px">入仓<span class=co>:</span></div><div class="ln vl" style="left:1318px;top:597px">2022-11-14 20:02:07</div>
<div class="ln lb" style="left:1258px;top:617px">平仓<span class=co>:</span></div><div class="ln vl" style="left:1318px;top:617px">2022-11-14 20:03:01</div>
<div class="c" style="left:1464px;width:101px;top:607px;line-height:20px;padding:0 15px;overflow:hidden;text-overflow:ellipsis">60</div>
<div class="c" style="left:1566px;width:150px;top:607px;line-height:20px;padding:0 15px;overflow:hidden;text-overflow:ellipsis">test</div>
<div class="c" style="left:1717px;width:154px;top:607px;line-height:20px;padding:0 15px;overflow:hidden;text-overflow:ellipsis">BTC</div>
<div class="bd" style="left:311px;top:659px;width:46px;background:#009688">已平仓</div>
<div class="rim" style="left:417px;top:659px;width:36px">正常</div>
<div class="c" style="left:486px;width:150px;top:658px;line-height:20px">100.0000</div>
<div class="bd" style="left:671px;top:659px;width:34px;background:#009688">买涨</div>
<div class="bd" style="left:773px;top:659px;width:34px;background:#009688">赢利</div>
<div class="ln" style="left:856px;top:648px"><span class="lb">总赢返<span class=co>:</span></span></div><div class="ln vl" style="left:916px;top:648px">102.89700000</div>
<div class="ln" style="left:856px;top:668px"><span class="lb">手续费<span class=co>:</span></span></div><div class="ln vl" style="left:916px;top:668px">0.1030</div>
<div class="ln lb" style="left:1057px;top:648px">入仓<span class=co>:</span></div><div class="ln vl" style="left:1117px;top:648px">16831.78000000</div>
<div class="ln lb" style="left:1057px;top:668px">平仓<span class=co>:</span></div><div class="ln vl" style="left:1117px;top:668px">16833.46764500</div>
<div class="ln lb" style="left:1258px;top:648px">入仓<span class=co>:</span></div><div class="ln vl" style="left:1318px;top:648px">2022-11-14 16:02:49</div>
<div class="ln lb" style="left:1258px;top:668px">平仓<span class=co>:</span></div><div class="ln vl" style="left:1318px;top:668px">2022-11-14 16:03:43</div>
<div class="c" style="left:1464px;width:101px;top:658px;line-height:20px;padding:0 15px;overflow:hidden;text-overflow:ellipsis">60</div>
<div class="c" style="left:1566px;width:150px;top:658px;line-height:20px;padding:0 15px;overflow:hidden;text-overflow:ellipsis">test</div>
<div class="c" style="left:1717px;width:154px;top:658px;line-height:20px;padding:0 15px;overflow:hidden;text-overflow:ellipsis">BTC</div>
<div class="bd" style="left:311px;top:710px;width:46px;background:#009688">已平仓</div>
<div class="rim" style="left:417px;top:710px;width:36px">正常</div>
<div class="c" style="left:486px;width:150px;top:709px;line-height:20px">100.0000</div>
<div class="bd" style="left:671px;top:710px;width:34px;background:#009688">买涨</div>
<div class="bd" style="left:773px;top:710px;width:34px;background:#009688">赢利</div>
<div class="ln" style="left:856px;top:699px"><span class="lb">总赢返<span class=co>:</span></span></div><div class="ln vl" style="left:916px;top:699px">102.89700000</div>
<div class="ln" style="left:856px;top:719px"><span class="lb">手续费<span class=co>:</span></span></div><div class="ln vl" style="left:916px;top:719px">0.1030</div>
<div class="ln lb" style="left:1057px;top:699px">入仓<span class=co>:</span></div><div class="ln vl" style="left:1117px;top:699px">15963.46000000</div>
<div class="ln lb" style="left:1057px;top:719px">平仓<span class=co>:</span></div><div class="ln vl" style="left:1117px;top:719px">15965.05644200</div>
<div class="ln lb" style="left:1258px;top:699px">入仓<span class=co>:</span></div><div class="ln vl" style="left:1318px;top:699px">2022-11-14 14:29:39</div>
<div class="ln lb" style="left:1258px;top:719px">平仓<span class=co>:</span></div><div class="ln vl" style="left:1318px;top:719px">2022-11-14 14:30:32</div>
<div class="c" style="left:1464px;width:101px;top:709px;line-height:20px;padding:0 15px;overflow:hidden;text-overflow:ellipsis">60</div>
<div class="c" style="left:1566px;width:150px;top:709px;line-height:20px;padding:0 15px;overflow:hidden;text-overflow:ellipsis">test</div>
<div class="c" style="left:1717px;width:154px;top:709px;line-height:20px;padding:0 15px;overflow:hidden;text-overflow:ellipsis">BTC</div>
<div class="bd" style="left:311px;top:761px;width:46px;background:#009688">已平仓</div>
<div class="bd" style="left:418px;top:761px;width:34px;background:#009688">控赢</div>
<div class="c" style="left:486px;width:150px;top:760px;line-height:20px">20816.0000</div>
<div class="bd" style="left:671px;top:761px;width:34px;background:#f56a6a">买跌</div>
<div class="bd" style="left:773px;top:761px;width:34px;background:#009688">赢利</div>
<div class="ln" style="left:856px;top:750px"><span class="lb">总赢返<span class=co>:</span></span></div><div class="ln vl" style="left:916px;top:750px">21834.94320000</div>
<div class="ln" style="left:856px;top:770px"><span class="lb">手续费<span class=co>:</span></span></div><div class="ln vl" style="left:916px;top:770px">21.8568</div>
<div class="ln lb" style="left:1057px;top:750px">入仓<span class=co>:</span></div><div class="ln vl" style="left:1117px;top:750px">0.00000000</div>
<div class="ln lb" style="left:1057px;top:770px">平仓<span class=co>:</span></div><div class="ln vl" style="left:1117px;top:770px">-0.62378000</div>
<div class="ln lb" style="left:1258px;top:750px">入仓<span class=co>:</span></div><div class="ln vl" style="left:1318px;top:750px">2022-10-31 22:07:16</div>
<div class="ln lb" style="left:1258px;top:770px">平仓<span class=co>:</span></div><div class="ln vl" style="left:1318px;top:770px">2022-10-31 22:10:12</div>
<div class="c" style="left:1464px;width:101px;top:760px;line-height:20px;padding:0 15px;overflow:hidden;text-overflow:ellipsis">180</div>
<div class="c" style="left:1566px;width:150px;top:760px;line-height:20px;padding:0 15px;overflow:hidden;text-overflow:ellipsis">xkjly54188@gmail.com</div>
<div class="c" style="left:1717px;width:154px;top:760px;line-height:20px;padding:0 15px;overflow:hidden;text-overflow:ellipsis">ETH</div>
<div class="bd" style="left:311px;top:812px;width:46px;background:#009688">已平仓</div>
<div class="bd" style="left:418px;top:812px;width:34px;background:#f56a6a">控亏</div>
<div class="c" style="left:486px;width:150px;top:811px;line-height:20px">21277.0000</div>
<div class="bd" style="left:671px;top:812px;width:34px;background:#009688">买涨</div>
<div class="bd" style="left:773px;top:812px;width:34px;background:#ffb800">亏损</div>
<div class="ln" style="left:856px;top:811px"><span class="lb">单亏损<span class=co>:</span></span></div><div class="ln vl" style="left:916px;top:811px">1063.85000000</div>
<div class="ln lb" style="left:1057px;top:801px">入仓<span class=co>:</span></div><div class="ln vl" style="left:1117px;top:801px">0.00000000</div>
<div class="ln lb" style="left:1057px;top:821px">平仓<span class=co>:</span></div><div class="ln vl" style="left:1117px;top:821px">-2.03394500</div>
<div class="ln lb" style="left:1258px;top:801px">入仓<span class=co>:</span></div><div class="ln vl" style="left:1318px;top:801px">2022-10-31 22:05:49</div>
<div class="ln lb" style="left:1258px;top:821px">平仓<span class=co>:</span></div><div class="ln vl" style="left:1318px;top:821px">2022-10-31 22:08:44</div>
<div class="c" style="left:1464px;width:101px;top:811px;line-height:20px;padding:0 15px;overflow:hidden;text-overflow:ellipsis">180</div>
<div class="c" style="left:1566px;width:150px;top:811px;line-height:20px;padding:0 15px;overflow:hidden;text-overflow:ellipsis">xy1986@gmail.com</div>
<div class="c" style="left:1717px;width:154px;top:811px;line-height:20px;padding:0 15px;overflow:hidden;text-overflow:ellipsis">BTC</div>
<div class="bd" style="left:311px;top:863px;width:46px;background:#009688">已平仓</div>
<div class="bd" style="left:418px;top:863px;width:34px;background:#009688">控赢</div>
<div class="c" style="left:486px;width:150px;top:862px;line-height:20px">137.0000</div>
<div class="bd" style="left:671px;top:863px;width:34px;background:#009688">买涨</div>
<div class="bd" style="left:773px;top:863px;width:34px;background:#009688">赢利</div>
<div class="ln" style="left:856px;top:852px"><span class="lb">总赢返<span class=co>:</span></span></div><div class="ln vl" style="left:916px;top:852px">140.96889000</div>
<div class="ln" style="left:856px;top:872px"><span class="lb">手续费<span class=co>:</span></span></div><div class="ln vl" style="left:916px;top:872px">0.1411</div>
<div class="ln lb" style="left:1057px;top:852px">入仓<span class=co>:</span></div><div class="ln vl" style="left:1117px;top:852px">0.00000000</div>
<div class="ln lb" style="left:1057px;top:872px">平仓<span class=co>:</span></div><div class="ln vl" style="left:1117px;top:872px">0.00001531</div>
<div class="ln lb" style="left:1258px;top:852px">入仓<span class=co>:</span></div><div class="ln vl" style="left:1318px;top:852px">2022-10-31 22:04:41</div>
<div class="ln lb" style="left:1258px;top:872px">平仓<span class=co>:</span></div><div class="ln vl" style="left:1318px;top:872px">2022-10-31 22:05:34</div>
<div class="c" style="left:1464px;width:101px;top:862px;line-height:20px;padding:0 15px;overflow:hidden;text-overflow:ellipsis">60</div>
<div class="c" style="left:1566px;width:150px;top:862px;line-height:20px;padding:0 15px;overflow:hidden;text-overflow:ellipsis">390823912@qq.com</div>
<div class="c" style="left:1717px;width:154px;top:862px;line-height:20px;padding:0 15px;overflow:hidden;text-overflow:ellipsis">DCEP</div>
<div class="bd" style="left:311px;top:914px;width:46px;background:#009688">已平仓</div>
<div class="bd" style="left:418px;top:914px;width:34px;background:#009688">控赢</div>
<div class="c" style="left:486px;width:150px;top:913px;line-height:20px">6898.0000</div>
<div class="bd" style="left:671px;top:914px;width:34px;background:#009688">买涨</div>
<div class="bd" style="left:773px;top:914px;width:34px;background:#009688">赢利</div>
<div class="ln" style="left:856px;top:903px"><span class="lb">总赢返<span class=co>:</span></span></div><div class="ln vl" style="left:916px;top:903px">7235.65710000</div>
<div class="ln" style="left:856px;top:923px"><span class="lb">手续费<span class=co>:</span></span></div><div class="ln vl" style="left:916px;top:923px">7.2429</div>
<div class="ln lb" style="left:1057px;top:903px">入仓<span class=co>:</span></div><div class="ln vl" style="left:1117px;top:903px">0.00000000</div>
<div class="ln lb" style="left:1057px;top:923px">平仓<span class=co>:</span></div><div class="ln vl" style="left:1117px;top:923px">0.00001514</div>
<div class="ln lb" style="left:1258px;top:903px">入仓<span class=co>:</span></div><div class="ln vl" style="left:1318px;top:903px">2022-10-31 22:01:25</div>
<div class="ln lb" style="left:1258px;top:923px">平仓<span class=co>:</span></div><div class="ln vl" style="left:1318px;top:923px">2022-10-31 22:04:20</div>
<div class="c" style="left:1464px;width:101px;top:913px;line-height:20px;padding:0 15px;overflow:hidden;text-overflow:ellipsis">180</div>
<div class="c" style="left:1566px;width:150px;top:913px;line-height:20px;padding:0 15px;overflow:hidden;text-overflow:ellipsis">yn86@gmail.com</div>
<div class="c" style="left:1717px;width:154px;top:913px;line-height:20px;padding:0 15px;overflow:hidden;text-overflow:ellipsis">DCEP</div>
</body></html>
